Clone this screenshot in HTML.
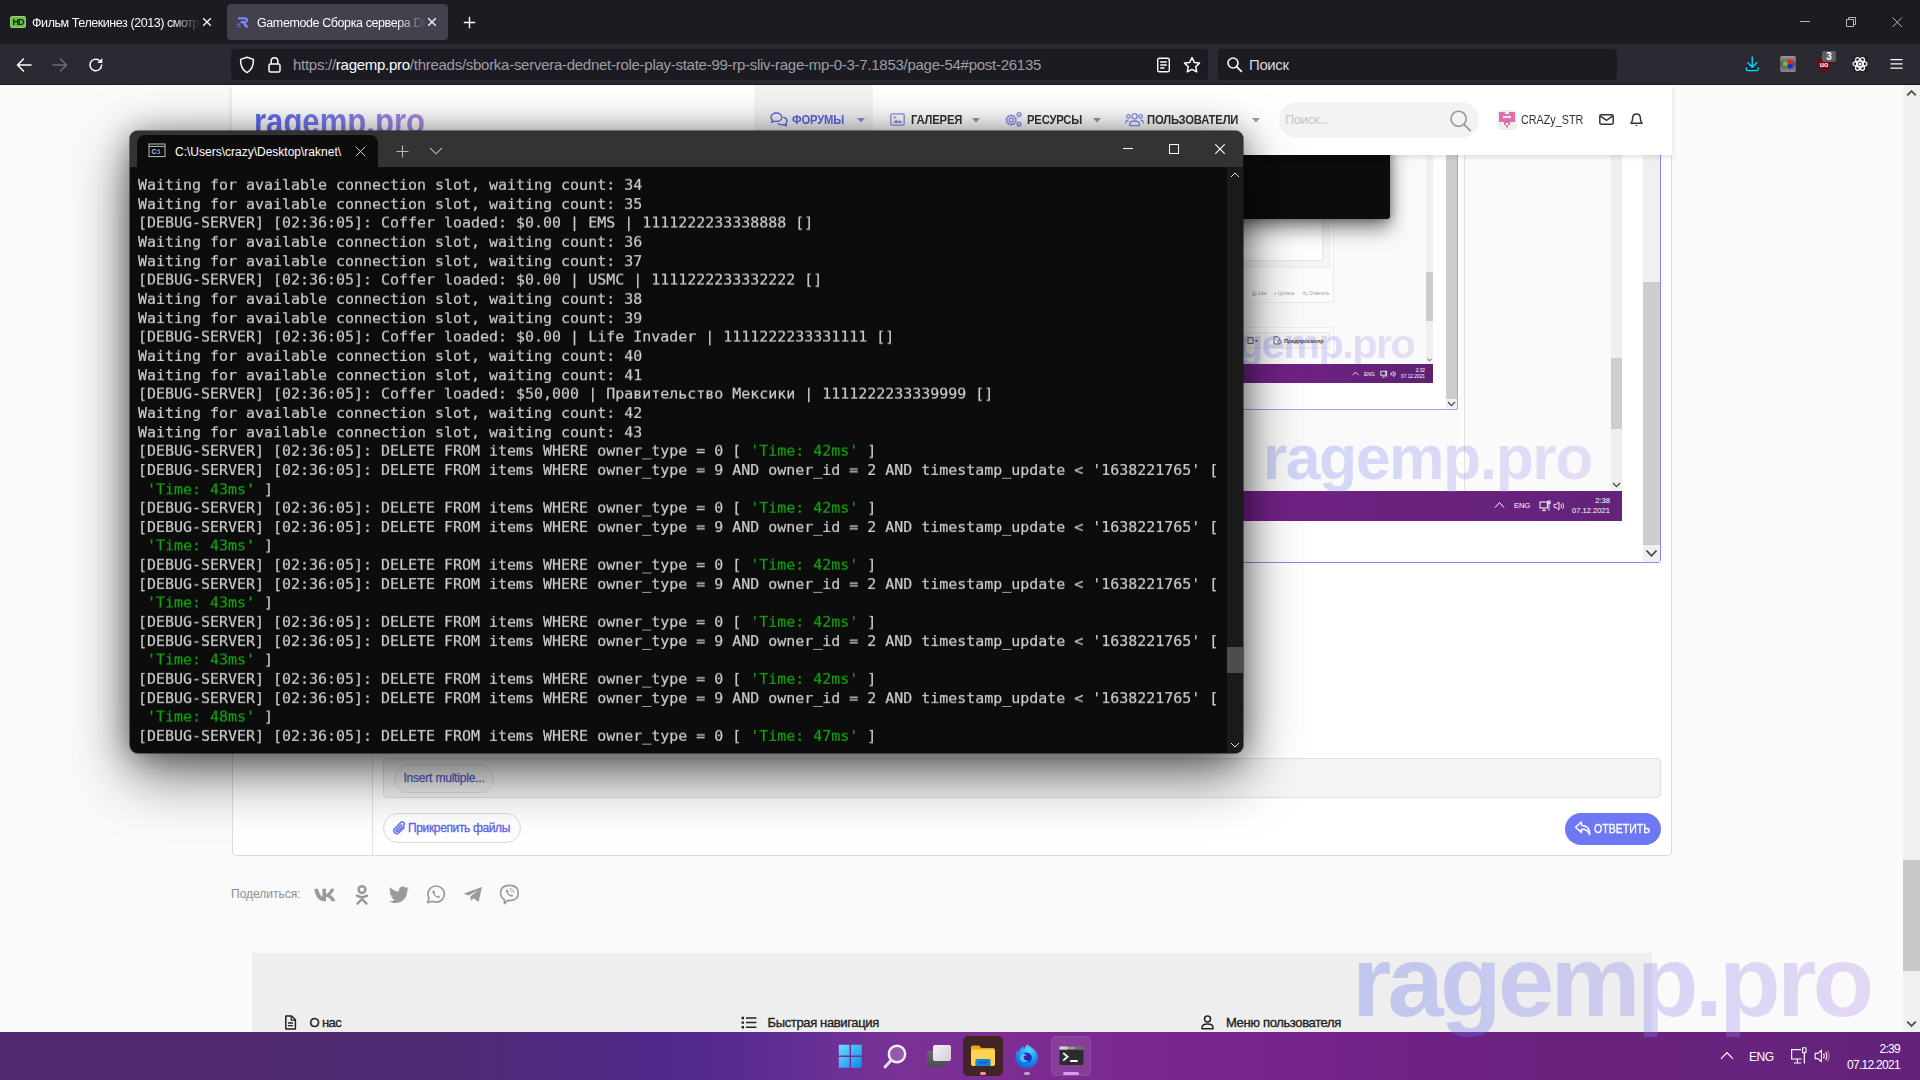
<!DOCTYPE html>
<html lang="ru">
<head>
<meta charset="utf-8">
<title>Gamemode Сборка сервера</title>
<style>
*{box-sizing:border-box;margin:0;padding:0}
html,body{width:1920px;height:1080px;overflow:hidden;background:#fafafa;font-family:"Liberation Sans",sans-serif;}
.abs{position:absolute}
#root{position:relative;width:1920px;height:1080px;overflow:hidden;background:#fafafa}
/* ---------- firefox chrome ---------- */
#tabbar{left:0;top:0;width:1920px;height:44px;background:#1c1b22}
#navbar{left:0;top:44px;width:1920px;height:41px;background:#2b2a33;border-bottom:1px solid #1a1920}
.tabtxt{font-size:13px;color:#fbfbfe;white-space:nowrap;overflow:hidden;line-height:16px}
#tab2{left:227px;top:4px;width:221px;height:36px;background:#42414d;border-radius:4px}
#urlbar{left:231px;top:48.5px;width:977px;height:31px;background:#1c1b22;border-radius:4px}
#searchbar{left:1218px;top:48.5px;width:399px;height:31px;background:#1c1b22;border-radius:4px}
#urltxt{left:293px;top:56px;font-size:15px;line-height:18px;color:#9f9ea8;white-space:nowrap;letter-spacing:-.272px}
#urltxt b{font-weight:normal;color:#fbfbfe}
/* ---------- page ---------- */
#page{left:0;top:85px;width:1903px;height:947px;background:#fafafa;overflow:hidden}
#pscroll{left:1903px;top:85px;width:17px;height:947px;background:#f0f0f0}
#pthumb{left:1903px;top:860px;width:17px;height:111px;background:#c8c8c8}
#hdr{left:232px;top:85px;width:1440px;height:70px;background:#fff;box-shadow:0 2px 6px rgba(0,0,0,.12)}
.nav{font-size:13px;font-weight:bold;color:#333;white-space:nowrap;line-height:16px;letter-spacing:-.2px;margin-top:1px}
.wm{font-weight:bold;white-space:nowrap;background:linear-gradient(90deg,#5a6cf0 0%,#7c7cf0 45%,#b18ce6 100%);-webkit-background-clip:text;background-clip:text;color:transparent;-webkit-text-fill-color:transparent}
.sx{transform:scaleX(.865);transform-origin:0 0}
.sx2{transform:scaleX(.83);transform-origin:0 0}
.ft{font-size:13px;line-height:16px;color:#222;white-space:nowrap;-webkit-text-stroke:.35px #222}
/* ---------- terminal ---------- */
#term{left:130px;top:131px;width:1113px;height:622px;background:#0c0c0c;border-radius:8px;box-shadow:0 20px 58px rgba(0,0,0,.58),0 2px 30px rgba(0,0,0,.36),0 0 0 1px rgba(40,40,40,.5);overflow:hidden}
#ttitle{left:0;top:0;width:1113px;height:36px;background:#333333}
#ttab{left:7px;top:4px;width:241px;height:32px;background:#0c0c0c;border-radius:8px 8px 0 0}
#tout{left:8px;top:45px;width:1090px;font-family:"DejaVu Sans Mono","Liberation Mono",monospace;font-size:14.965px;line-height:20.652px;color:#cccccc;white-space:pre;will-change:transform;transform:scaleY(.92);transform-origin:0 0;-webkit-text-stroke:.2px}
#tout i{font-style:normal;color:#13a10e}
#tsb{left:1097px;top:36px;width:16px;height:586px;background:#1a1a1a}
/* ---------- taskbar ---------- */
#taskbar{left:0;top:1032px;width:1920px;height:48px;background:linear-gradient(90deg,#52286e 0%,#4e2a72 23%,#50288a 34%,#5e2d92 40.6%,#6b3096 43.2%,#793194 47%,#7d2d91 52%,#7a2a90 57%,#74238a 68%,#6c2280 78%,#63237a 100%)}
.tray{color:#fff;font-size:12px;white-space:nowrap;line-height:14px}
</style>
</head>
<body>
<div id="root">

<!-- PAGE -->
<div id="page" class="abs"></div>
<div id="pagecontent">
<!-- post box -->
<div class="abs" style="left:232px;top:100px;width:1440px;height:756px;background:#fff;border:1px solid #dcdcdc;border-radius:4px"></div>
<div class="abs" style="left:372px;top:100px;width:1px;height:755px;background:#e2e2e2"></div>
<!-- editor blue frame -->
<div class="abs" style="left:383px;top:100px;width:1278px;height:463px;background:#fff;border:1px solid #8289f6;border-radius:3px"></div>

<!-- ===== nested screenshot level 1 ===== -->
<div class="abs" style="left:400px;top:150px;width:1222px;height:341px;background:#fafafa"></div>
<div class="abs" style="left:400px;top:150px;width:1064px;height:260px;background:#fff"></div>
<div class="abs" style="left:1458px;top:150px;width:6px;height:341px;background:#fdfdfd"></div>
<div class="abs" style="left:1464px;top:150px;width:1px;height:341px;background:#e1e1e1"></div>
<!-- level1 page scrollbar -->
<div class="abs" style="left:1611px;top:150px;width:11px;height:341px;background:#efefef"></div>
<div class="abs" style="left:1611px;top:358px;width:11px;height:71px;background:#cdcdcd"></div>
<svg class="abs" style="left:1612px;top:482px" width="9" height="6" viewBox="0 0 9 6"><path d="M1 1 L4.5 4.6 L8 1" stroke="#444" stroke-width="1.3" fill="none"/></svg>

<!-- ===== level 2 (inside level1 editor) ===== -->
<div class="abs" style="left:1100px;top:150px;width:326px;height:215px;background:#fafafa"></div>
<!-- l2 post boxes -->
<div class="abs" style="left:1100px;top:150px;width:234px;height:153px;background:#fcfcfc;border:1px solid #ececec;border-radius:2px"></div>
<div class="abs" style="left:1100px;top:150px;width:230px;height:118px;background:#f4f4f4;border:1px solid #ececec"></div>
<div class="abs" style="left:1100px;top:150px;width:223px;height:111px;background:#fff;border:1px solid #e6e6e6"></div>
<div class="abs" style="left:1100px;top:327px;width:234px;height:40px;background:#fbfbfb;border:1px solid #ececec;border-radius:2px"></div>
<div class="abs" style="left:1100px;top:332px;width:230px;height:17px;background:#f4f4f4;border:1px solid #e6e6e6"></div>
<div class="abs" style="left:1265px;top:332px;width:1px;height:17px;background:#e2e2e2"></div>
<svg class="abs" style="left:1252px;top:291px" width="5" height="5" viewBox="0 0 5 5"><path d="M.6 2.2 H1.6 V4.6 H.6Z M1.8 2.2 L2.8 .4 L3.2 2 H4.4 L4 4.6 H1.8Z" fill="none" stroke="#9a9a9a" stroke-width=".5"/></svg>
<div class="abs" style="left:1258px;top:290px;font-size:5px;line-height:7px;color:#9f9f9f;white-space:nowrap;letter-spacing:-.1px">Like</div>
<div class="abs" style="left:1274px;top:290px;font-size:5px;line-height:7px;color:#9f9f9f;white-space:nowrap;letter-spacing:-.1px">+ Цитата</div>
<svg class="abs" style="left:1302px;top:291px" width="6" height="5" viewBox="0 0 6 5"><path d="M2.4 .6 L.6 2.2 L2.4 3.8 V2.8 C3.8 2.8 4.6 3.2 5.2 4.4 C5.2 2.6 4.2 1.6 2.4 1.6Z" fill="none" stroke="#9a9a9a" stroke-width=".5"/></svg>
<div class="abs" style="left:1309px;top:290px;font-size:5px;line-height:7px;color:#9f9f9f;white-space:nowrap;letter-spacing:-.1px">Ответить</div>
<svg class="abs" style="left:1247px;top:336px" width="12" height="9" viewBox="0 0 12 9"><rect x="1" y="1.5" width="5" height="6" fill="none" stroke="#555" stroke-width=".9"/><path d="M8 4 L11 4 L9.5 6Z" fill="#555"/></svg>
<svg class="abs" style="left:1273px;top:336px" width="10" height="9" viewBox="0 0 10 9"><path d="M1 .7 H5 L6.6 2.4 V8 H1Z" fill="none" stroke="#444" stroke-width=".8"/><circle cx="6.6" cy="6" r="1.6" fill="#fff" stroke="#444" stroke-width=".7"/></svg>
<div class="abs" style="left:1284px;top:337px;font:bold 5.6px/8px 'Liberation Sans',sans-serif;color:#333;white-space:nowrap;letter-spacing:-.1px">Предпросмотр</div>
<!-- l2 inner terminal -->
<div class="abs" style="left:1100px;top:140px;width:290px;height:79px;background:#0c0c0c;border-radius:0 0 3px 0;box-shadow:0 9px 20px rgba(0,0,0,.5),0 1px 10px rgba(0,0,0,.3)"></div>
<!-- l2 watermark -->
<div class="abs wm" style="left:1202px;top:321.3px;font-size:41.5px;line-height:45px;padding-bottom:12px;letter-spacing:-1.6px;opacity:.25">ragemp.pro</div>
<!-- l2 page scrollbar -->
<div class="abs" style="left:1426px;top:150px;width:7px;height:215px;background:#f0f0f0"></div>
<div class="abs" style="left:1426px;top:272px;width:7px;height:49px;background:#cdcdcd"></div>
<svg class="abs" style="left:1427px;top:358px" width="5" height="4" viewBox="0 0 5 4"><path d="M.5 .7 L2.5 2.9 L4.5 .7" stroke="#444" stroke-width=".9" fill="none"/></svg>
<!-- l2 taskbar -->
<div class="abs" style="left:1100px;top:364.4px;width:333px;height:19px;background:linear-gradient(90deg,#79248f 0%,#6e2283 60%,#5e2172 100%)"></div>
<svg class="abs" style="left:1352px;top:371px" width="7" height="5" viewBox="0 0 7 5"><path d="M.6 4.2 L3.5 1 L6.4 4.2" stroke="#fff" stroke-width=".8" fill="none"/></svg>
<div class="abs" style="left:1364px;top:371px;font:5px/6px 'Liberation Sans',sans-serif;color:#fff">ENG</div>
<svg class="abs" style="left:1380px;top:370px" width="8" height="8" viewBox="0 0 8 8"><rect x=".8" y="1.2" width="5" height="4" fill="none" stroke="#fff" stroke-width=".8"/><path d="M2 7 H5 M6.6 .6 V7" stroke="#fff" stroke-width=".8"/></svg>
<svg class="abs" style="left:1390px;top:370px" width="8" height="8" viewBox="0 0 8 8"><path d="M.8 3 H2.2 L4 1.4 V6.6 L2.2 5 H.8Z" fill="none" stroke="#fff" stroke-width=".7"/><path d="M5.2 2.6 Q6.2 4 5.2 5.4" stroke="#fff" stroke-width=".7" fill="none"/></svg>
<div class="abs" style="left:1395px;top:367.5px;width:30px;text-align:right;font:4.8px/6.3px 'Liberation Sans',sans-serif;color:#fff;white-space:nowrap">2:32<br>07.12.2021</div>
<!-- l2 editor (textarea) scrollbar + frame -->
<div class="abs" style="left:1100px;top:383px;width:346px;height:26px;background:#fff"></div>
<div class="abs" style="left:1433px;top:150px;width:13px;height:259px;background:#fff"></div>
<div class="abs" style="left:1446px;top:150px;width:11px;height:259px;background:#f0f0f0"></div>
<div class="abs" style="left:1446px;top:150px;width:11px;height:249px;background:#cdcdcd"></div>
<svg class="abs" style="left:1447px;top:401px" width="9" height="6" viewBox="0 0 9 6"><path d="M1 1 L4.5 4.6 L8 1" stroke="#444" stroke-width="1.3" fill="none"/></svg>
<div class="abs" style="left:1100px;top:140px;width:358px;height:270px;border:1px solid #9ea3f5;border-radius:2px;border-top:none;border-left:none"></div>

<!-- level1 watermark -->
<!-- level1 taskbar -->
<div class="abs" style="left:400px;top:490.5px;width:1222px;height:30.5px;background:linear-gradient(90deg,#52286e 0%,#4e2a72 23%,#50288a 34%,#5e2d92 40.6%,#6b3096 43.2%,#793194 47%,#7d2d91 52%,#7a2a90 57%,#74238a 68%,#6c2280 78%,#63237a 100%)"></div>
<svg class="abs" style="left:1494px;top:501px" width="11" height="8" viewBox="0 0 11 8"><path d="M1 6.6 L5.5 1.6 L10 6.6" stroke="#fff" stroke-width="1" fill="none"/></svg>
<div class="abs" style="left:1514px;top:501px;font:7.6px/10px 'Liberation Sans',sans-serif;color:#fff;letter-spacing:-.1px">ENG</div>
<svg class="abs" style="left:1539px;top:500px" width="12" height="12" viewBox="0 0 12 12"><rect x="1" y="2" width="7.4" height="6" fill="none" stroke="#fff" stroke-width="1"/><path d="M3 10.6 H7 M5 8 V10.6 M10 1 V10.6 M8.8 1 H11.2 V3.6 H8.8Z" stroke="#fff" stroke-width=".9" fill="none"/></svg>
<svg class="abs" style="left:1553px;top:500px" width="13" height="12" viewBox="0 0 13 12"><path d="M1 4.4 H3.2 L6 2 V10 L3.2 7.6 H1Z" fill="none" stroke="#fff" stroke-width=".9"/><path d="M7.8 4 Q9.2 6 7.8 8 M9.6 2.8 Q11.8 6 9.6 9.2" stroke="#fff" stroke-width=".8" fill="none"/></svg>
<div class="abs" style="left:1560px;top:496px;width:50px;text-align:right;font:7.6px/10.2px 'Liberation Sans',sans-serif;color:#fff;white-space:nowrap">2:38<br>07.12.2021</div>

<div class="abs wm" style="left:1263px;top:420px;font-size:62.5px;line-height:74px;padding-bottom:20px;letter-spacing:-1.5px;opacity:.26">ragemp.pro</div>
<!-- outer editor scrollbar -->
<div class="abs" style="left:1643px;top:150px;width:17px;height:412px;background:#f0f0f0"></div>
<div class="abs" style="left:1643px;top:282px;width:17px;height:263px;background:#cdcdcd"></div>
<svg class="abs" style="left:1645px;top:549px" width="13" height="9" viewBox="0 0 13 9"><path d="M1.5 1.5 L6.5 6.8 L11.5 1.5" stroke="#444" stroke-width="1.8" fill="none"/></svg>

<!-- attach bar -->
<div class="abs" style="left:383px;top:758px;width:1278px;height:40px;background:#f5f5f5;border:1px solid #e0e0e0;border-radius:4px"></div>
<div class="abs" style="left:394px;top:764px;width:100px;height:29px;background:#f1f1f1;border:1px solid #dddddd;border-radius:15px;color:#5559c0;font-size:12px;line-height:27px;text-align:center;letter-spacing:-.2px;-webkit-text-stroke:.25px #5559c0">Insert multiple...</div>
<div class="abs" style="left:383px;top:813px;width:138px;height:30px;background:#fff;border:1px solid #dcdcdc;border-radius:15px"></div>
<svg class="abs" style="left:390.5px;top:819.5px" width="17" height="17" viewBox="0 0 15 15"><path d="M11.6 6.6 L7 11.2 A2.6 2.6 0 0 1 3.3 7.5 L8.6 2.2 A1.8 1.8 0 0 1 11.2 4.8 L6.2 9.8 A.9 .9 0 0 1 4.9 8.5 L9.2 4.2" stroke="#6a72ee" stroke-width="1.4" fill="none" stroke-linecap="round"/></svg>
<div class="abs" style="left:408px;top:820px;color:#5b64e6;font-size:12px;line-height:16px;white-space:nowrap;letter-spacing:-.36px;-webkit-text-stroke:.3px #5b64e6">Прикрепить файлы</div>
<!-- reply button -->
<div class="abs" style="left:1565px;top:813px;width:96px;height:32px;background:#6e78f5;border-radius:16px"></div>
<svg class="abs" style="left:1574px;top:820px" width="18" height="17" viewBox="0 0 18 17"><path d="M7.4 2 L1.6 7.2 L7.4 12.4 V9.2 C11.4 9 14 10.2 15.6 14.6 C16 8.6 12.6 5.4 7.4 5.2 Z" stroke="#fff" stroke-width="1.5" fill="none" stroke-linejoin="round"/></svg>
<div class="abs" style="left:1594px;top:821px;color:#fff;font-size:12px;line-height:16px;white-space:nowrap;-webkit-text-stroke:.3px #fff;transform:scaleX(.88);transform-origin:0 0">ОТВЕТИТЬ</div>

<!-- share row -->
<div class="abs" style="left:231px;top:886px;color:#8f8f8f;font-size:12px;line-height:16px;white-space:nowrap;letter-spacing:0">Поделиться:</div>
<div id="share">
<svg class="abs" style="left:314px;top:887.5px" width="24.4" height="14" viewBox="0 0 22 13" preserveAspectRatio="none"><path d="M.4 .6 H3.8 C4.4 4.6 6.4 7.6 7.6 8.2 V.6 H10.8 V5.4 C12.6 5.2 14.4 3 15.2 .6 H18.4 C17.8 3.4 16 5.4 14.6 6.4 C16.2 7.2 18.4 9.2 19.4 12.4 H15.8 C15 10.2 13.2 8.4 10.8 8.2 V12.4 H10 C4.6 12.4 .8 7.6 .4 .6Z" fill="#9a9a9a"/></svg>
<svg class="abs" style="left:355px;top:884px" width="14" height="21" viewBox="0 0 14 21"><circle cx="7" cy="5.6" r="3.4" fill="none" stroke="#9a9a9a" stroke-width="2.5"/><path d="M2 11.6 Q7 14.8 12 11.6 M7 13.4 V15 M7 15 L2.6 19.6 M7 15 L11.4 19.6" fill="none" stroke="#9a9a9a" stroke-width="2.5" stroke-linecap="round"/></svg>
<svg class="abs" style="left:388px;top:886px" width="22" height="17" viewBox="0 0 22 17"><path d="M21 2.4 C20.3 2.8 19.5 3 18.7 3.1 C19.5 2.6 20.2 1.8 20.5 .9 C19.7 1.4 18.8 1.7 17.9 1.9 C16.3 .2 13.6 .2 12 1.8 C10.9 2.9 10.5 4.3 10.9 5.7 C7.4 5.5 4.3 3.9 2.2 1.3 C1.1 3.2 1.6 5.6 3.5 6.8 C2.8 6.8 2.2 6.6 1.6 6.3 C1.6 8.3 3 10 5 10.4 C4.4 10.6 3.7 10.6 3.1 10.5 C3.6 12.2 5.2 13.4 7 13.4 C5.3 14.8 3 15.4 .9 15.2 C2.8 16.4 5 17 7.2 17 C15.2 17 19.6 10.4 19.3 4.2 C20 3.7 20.6 3.1 21 2.4Z" fill="#9a9a9a"/></svg>
<svg class="abs" style="left:426px;top:885px" width="20" height="19" viewBox="0 0 20 19"><path d="M10.2 1 C14.7 1 18.4 4.6 18.4 9.1 C18.4 13.6 14.7 17.2 10.2 17.2 C8.8 17.2 7.4 16.8 6.2 16.2 L1.6 17.6 L3 13.2 C2.3 12 1.9 10.6 1.9 9.1 C1.9 4.6 5.6 1 10.2 1Z" fill="none" stroke="#9a9a9a" stroke-width="1.7" stroke-linejoin="round"/><path d="M7.2 5.2 C6.6 5.6 6.2 6.6 6.6 7.8 C7.4 10 9.4 12 11.8 12.8 C12.8 13 13.8 12.6 14.2 11.8 L12.2 10.4 L11.2 11.2 C10 10.6 9 9.6 8.4 8.4 L9.2 7.4 L8 5.2Z" fill="#9a9a9a"/></svg>
<svg class="abs" style="left:463px;top:886px" width="20" height="17" viewBox="0 0 20 17"><path d="M.8 7.6 L19 1 L15.6 16 L10.6 12.2 L8 15 L7.4 10.6 L15.4 4 L5.6 9.6 Z" fill="#9a9a9a"/></svg>
<svg class="abs" style="left:499px;top:884px" width="21" height="21" viewBox="0 0 21 21"><path d="M10.4 1.4 C15.6 1.4 19.2 3.6 19.2 9 C19.2 14.2 15.8 16.6 10.6 16.6 C10 16.6 9.4 16.6 8.8 16.4 L5.4 19.6 V15.4 C2.8 14.2 1.6 12 1.6 9 C1.6 3.6 5.2 1.4 10.4 1.4Z" fill="none" stroke="#9a9a9a" stroke-width="1.6" stroke-linejoin="round"/><path d="M7.6 5.4 C7 5.8 6.6 6.6 7 7.6 C7.8 9.8 9.8 11.8 12.2 12.6 C13.2 12.8 14 12.2 14.2 11.6 L12.6 10.4 L11.6 11 C10.4 10.4 9.4 9.4 8.8 8.2 L9.6 7.2 L8.4 5.4Z" fill="#9a9a9a"/><path d="M11 4.6 C13.2 4.8 14.6 6.2 14.8 8.4 M11.2 6.4 C12.2 6.6 12.8 7.2 13 8.2" fill="none" stroke="#9a9a9a" stroke-width=".9" stroke-linecap="round"/></svg>
</div>


<!-- footer -->
<div class="abs" style="left:252px;top:953px;width:1400px;height:90px;background:#eeeeee"></div>
<div id="footer">
<svg class="abs" style="left:284px;top:1015px" width="13" height="15" viewBox="0 0 13 15"><path d="M1.8 1 H7.6 L11.4 4.8 V14 H1.8Z" fill="none" stroke="#222" stroke-width="1.5" stroke-linejoin="round"/><path d="M4 8 H9 M4 10.6 H9" stroke="#222" stroke-width="1.4"/><path d="M7.2 1.2 V5.2 H11.2" fill="none" stroke="#222" stroke-width="1.2"/></svg>
<div class="abs ft" style="left:309.5px;top:1015px;letter-spacing:-.6px">О нас</div>
<svg class="abs" style="left:741px;top:1016px" width="16" height="13" viewBox="0 0 16 13"><path d="M5 2 H15.4 M5 6.6 H15.4 M5 11.2 H15.4" stroke="#222" stroke-width="1.5"/><path d="M.6 .8 H3 V3.2 H.6Z M.6 5.4 H3 V7.8 H.6Z M.6 10 H3 V12.4 H.6Z" fill="#222"/></svg>
<div class="abs ft" style="left:767.5px;top:1015px;letter-spacing:-.36px">Быстрая навигация</div>
<svg class="abs" style="left:1201px;top:1015px" width="13" height="15" viewBox="0 0 13 15"><circle cx="6.5" cy="4" r="3" fill="none" stroke="#222" stroke-width="1.5"/><path d="M1 13.8 V12.6 C1 10.4 3 9 6.5 9 C10 9 12 10.4 12 12.6 V13.8Z" fill="none" stroke="#222" stroke-width="1.5" stroke-linejoin="round"/></svg>
<div class="abs ft" style="left:1226px;top:1015px;letter-spacing:-.36px">Меню пользователя</div>
</div>

</div>

<div id="hdr" class="abs"></div>
<div id="hdrcontent">
<div class="abs" style="left:754px;top:85px;width:119px;height:70px;background:#f3f3f3"></div>
<div class="abs wm" style="left:254px;top:103.3px;font-size:37px;line-height:37px;transform:scaleX(.84);transform-origin:0 0">ragemp.pro</div>
<!-- nav: forums -->
<svg class="abs" style="left:770px;top:112px" width="18" height="15" viewBox="0 0 18 15"><path d="M6.4 1 C9.4 1 11.8 2.8 11.8 5.2 C11.8 7.6 9.4 9.4 6.4 9.4 C5.6 9.4 4.9 9.3 4.2 9.1 L1.6 10.4 L2.5 8.2 C1.6 7.4 1 6.4 1 5.2 C1 2.8 3.4 1 6.4 1 Z" fill="none" stroke="#5b66e6" stroke-width="1.4" stroke-linejoin="round"/><path d="M13.4 5.4 C15.6 5.9 17 7.3 17 9 C17 10.1 16.5 11 15.7 11.7 L16.4 13.8 L14 12.6 C13.4 12.8 12.7 12.9 12 12.9 C10.2 12.9 8.7 12.2 7.8 11.1" fill="none" stroke="#5b66e6" stroke-width="1.4" stroke-linejoin="round"/></svg>
<div class="abs nav sx" style="left:792px;top:111px;color:#5b66e6">ФОРУМЫ</div>
<svg class="abs" style="left:857px;top:118px" width="8" height="5" viewBox="0 0 8 5"><path d="M0 0 H8 L4 4.6Z" fill="#8a90ee"/></svg>
<!-- gallery -->
<svg class="abs" style="left:890px;top:113px" width="15" height="13" viewBox="0 0 15 13"><rect x=".8" y=".8" width="13.4" height="11.4" rx="1.4" fill="none" stroke="#8a90ee" stroke-width="1.3"/><path d="M3 10 L6 6.4 L8 8.6 L10 7 L12.2 10Z" fill="#8a90ee"/><circle cx="4.6" cy="4.4" r="1.1" fill="#8a90ee"/></svg>
<div class="abs nav sx" style="left:911px;top:111px">ГАЛЕРЕЯ</div>
<svg class="abs" style="left:972px;top:118px" width="8" height="5" viewBox="0 0 8 5"><path d="M0 0 H8 L4 4.6Z" fill="#9a9a9a"/></svg>
<!-- resources -->
<svg class="abs" style="left:1005px;top:111px" width="18" height="17" viewBox="0 0 18 17"><g fill="none" stroke="#8a90ee" stroke-width="1.3"><circle cx="6.2" cy="9" r="2"/><path d="M6.2 3.8 L7.4 5.2 L9.2 4.8 L9.6 6.6 L11.2 7.6 L10.4 9 L11.2 10.6 L9.6 11.4 L9.2 13.2 L7.4 12.8 L6.2 14.2 L5 12.8 L3.2 13.2 L2.8 11.4 L1.2 10.6 L2 9 L1.2 7.6 L2.8 6.6 L3.2 4.8 L5 5.2 Z" stroke-linejoin="round"/><circle cx="14" cy="3.6" r="1.9"/><circle cx="14" cy="13.2" r="1.9"/></g><circle cx="14" cy="3.6" r=".7" fill="#8a90ee"/><circle cx="14" cy="13.2" r=".7" fill="#8a90ee"/></svg>
<div class="abs nav sx" style="left:1027px;top:111px">РЕСУРСЫ</div>
<svg class="abs" style="left:1093px;top:118px" width="8" height="5" viewBox="0 0 8 5"><path d="M0 0 H8 L4 4.6Z" fill="#9a9a9a"/></svg>
<!-- users -->
<svg class="abs" style="left:1125px;top:112px" width="19" height="15" viewBox="0 0 19 15"><g fill="none" stroke="#8a90ee" stroke-width="1.3"><circle cx="9.5" cy="4.2" r="2.6"/><path d="M4.6 13.6 V12.4 C4.6 10.4 6.4 9 9.5 9 C12.6 9 14.4 10.4 14.4 12.4 V13.6 Z" stroke-linejoin="round"/><circle cx="3.4" cy="4.4" r="1.7"/><circle cx="15.6" cy="4.4" r="1.7"/><path d="M.8 11.6 V10.6 C.8 9.2 1.8 8.2 3.6 8.2 M18.2 11.6 V10.6 C18.2 9.2 17.2 8.2 15.4 8.2"/></g></svg>
<div class="abs nav sx" style="left:1147px;top:111px">ПОЛЬЗОВАТЕЛИ</div>
<svg class="abs" style="left:1252px;top:118px" width="8" height="5" viewBox="0 0 8 5"><path d="M0 0 H8 L4 4.6Z" fill="#9a9a9a"/></svg>
<!-- search pill -->
<div class="abs" style="left:1279px;top:102px;width:200px;height:36px;background:#f3f3f3;border-radius:18px"></div>
<div class="abs" style="left:1285px;top:112px;font-size:13px;line-height:16px;color:#c6c6c6;letter-spacing:-.35px;white-space:nowrap">Поиск...</div>
<svg class="abs" style="left:1449px;top:109px" width="23" height="23" viewBox="0 0 23 23"><circle cx="9.6" cy="9.8" r="7.6" fill="none" stroke="#9a9a9a" stroke-width="1.6"/><path d="M15 15.4 L21.4 21.6" stroke="#9a9a9a" stroke-width="1.8" stroke-linecap="round"/></svg>
<!-- avatar -->
<div class="abs" style="left:1497px;top:110px;width:20px;height:20px;background:#efefef;border-radius:4px"></div>
<svg class="abs" style="left:1498px;top:111px" width="18" height="18" viewBox="0 0 18 18"><path d="M1 1 H7 V3 H11 V1 H17 V11 H12 V14 H10 V16.5 H8 V14 H6 V11 H1Z M5 5 V7 H13 V5Z" fill="#e06fae" fill-rule="evenodd"/><rect x="8" y="12" width="2" height="2" fill="#fff"/></svg>
<div class="abs sx2" style="left:1521px;top:112px;font-size:13px;line-height:16px;color:#333;white-space:nowrap">CRAZy_STR</div>
<svg class="abs" style="left:1599px;top:114px" width="15" height="11" viewBox="0 0 15 11"><rect x=".8" y=".8" width="13.4" height="9.4" rx="1.4" fill="none" stroke="#333" stroke-width="1.5"/><path d="M1.2 1.8 L7.5 6.4 L13.8 1.8" fill="none" stroke="#333" stroke-width="1.5"/></svg>
<svg class="abs" style="left:1630px;top:113px" width="13" height="14" viewBox="0 0 13 14"><path d="M6.5 1 C9 1 10.4 2.8 10.4 5.4 C10.4 8 11 9 12 10.2 H1 C2 9 2.6 8 2.6 5.4 C2.6 2.8 4 1 6.5 1 Z" fill="none" stroke="#333" stroke-width="1.5" stroke-linejoin="round"/><path d="M5 12 Q6.5 14 8 12Z" fill="#333"/></svg>
</div>

<div id="pscroll" class="abs"></div>
<div id="pthumb" class="abs"></div>
<svg class="abs" style="left:1906px;top:89px" width="11" height="8" viewBox="0 0 11 8"><path d="M1.2 6.4 L5.5 2 L9.8 6.4" stroke="#505050" stroke-width="1.9" fill="none"/></svg>
<svg class="abs" style="left:1906px;top:1020px" width="11" height="8" viewBox="0 0 11 8"><path d="M1.2 1.6 L5.5 6 L9.8 1.6" stroke="#505050" stroke-width="1.9" fill="none"/></svg>

<!-- FIREFOX CHROME -->
<div id="tabbar" class="abs"></div>
<div id="navbar" class="abs"></div>
<div id="chrome">
<!-- tab 1 -->
<div class="abs" style="left:10px;top:16px;width:16px;height:12px;background:#6cc04a;border-radius:2px;border:1px solid #8ad868"></div>
<div class="abs" style="left:11px;top:16px;width:14px;height:12px;font:bold 9px/12px 'Liberation Sans',sans-serif;color:#16240e;letter-spacing:-1px;text-align:center">HD</div>
<div class="abs tabtxt" style="left:32px;top:15px;width:169px;font-size:12.5px;letter-spacing:-.43px;-webkit-mask-image:linear-gradient(90deg,#000 0,#000 140px,transparent 169px)">Фильм Телекинез (2013) смотреть онлайн</div>
<svg class="abs" style="left:202px;top:17px" width="10" height="10" viewBox="0 0 10 10"><path d="M1.2 1.2 L8.8 8.8 M8.8 1.2 L1.2 8.8" stroke="#fbfbfe" stroke-width="1.3" fill="none"/></svg>
<!-- tab 2 -->
<div id="tab2" class="abs"></div>
<svg class="abs" style="left:236px;top:15px" width="15" height="15" viewBox="0 0 15 15"><path d="M2 2.2 H9.2 C13 2.2 13 7.6 9.4 7.8 L12.8 12.6 H9.6 L6.6 8.2 H4.6 V6 H9 C10.4 6 10.4 4.4 9 4.4 H2 Z" fill="#7f86ff"/><path d="M0.6 8.6 H4.2 V10.2 H0.6 Z M1.2 11.2 H5 V12.6 H1.2Z" fill="#5f66d8"/></svg>
<div class="abs tabtxt" style="left:257px;top:15px;width:169px;font-size:12.5px;letter-spacing:-.4px;-webkit-mask-image:linear-gradient(90deg,#000 0,#000 140px,transparent 169px)">Gamemode Сборка сервера DEDNET Role Play</div>
<svg class="abs" style="left:427px;top:17px" width="10" height="10" viewBox="0 0 10 10"><path d="M1.2 1.2 L8.8 8.8 M8.8 1.2 L1.2 8.8" stroke="#fbfbfe" stroke-width="1.3" fill="none"/></svg>
<svg class="abs" style="left:463px;top:16px" width="13" height="13" viewBox="0 0 13 13"><path d="M6.5 0.8 V12.2 M0.8 6.5 H12.2" stroke="#fbfbfe" stroke-width="1.4" fill="none"/></svg>
<!-- window controls -->
<svg class="abs" style="left:1800px;top:21px" width="10" height="2" viewBox="0 0 10 2"><path d="M0 .5 H10" stroke="#b4b3bb" stroke-width="1"/></svg>
<svg class="abs" style="left:1846px;top:17px" width="11" height="11" viewBox="0 0 11 11"><path d="M0.5 2.5 H7.5 V9.5 H0.5 Z M2.5 2.5 V0.5 H9.5 V7.5 H7.5" stroke="#b4b3bb" stroke-width="1" fill="none"/></svg>
<svg class="abs" style="left:1892px;top:17px" width="11" height="11" viewBox="0 0 11 11"><path d="M0.5 0.5 L10 10 M10 0.5 L0.5 10" stroke="#b4b3bb" stroke-width="1" fill="none"/></svg>
<!-- nav buttons -->
<svg class="abs" style="left:16px;top:57px" width="16" height="16" viewBox="0 0 16 16"><path d="M15 8 H2 M7.5 2 L1.5 8 L7.5 14" stroke="#fbfbfe" stroke-width="1.5" fill="none" stroke-linecap="round" stroke-linejoin="round"/></svg>
<svg class="abs" style="left:52px;top:57px" width="16" height="16" viewBox="0 0 16 16"><path d="M1 8 H14 M8.5 2 L14.5 8 L8.5 14" stroke="#6e6d78" stroke-width="1.5" fill="none" stroke-linecap="round" stroke-linejoin="round"/></svg>
<svg class="abs" style="left:88px;top:57px" width="16" height="16" viewBox="0 0 16 16"><path d="M13.6 8 A5.8 5.8 0 1 1 11.2 3.3" stroke="#fbfbfe" stroke-width="1.5" fill="none" stroke-linecap="round"/><path d="M14.3 1 V6 H9.3 Z" fill="#fbfbfe"/></svg>
<!-- url bar -->
<div id="urlbar" class="abs"></div>
<svg class="abs" style="left:239px;top:56px" width="16" height="18" viewBox="0 0 16 18"><path d="M8 1.2 L14.4 3.4 C14.6 9.6 12.6 14 8 16.6 C3.4 14 1.4 9.6 1.6 3.4 Z" stroke="#fbfbfe" stroke-width="1.5" fill="none" stroke-linejoin="round"/></svg>
<svg class="abs" style="left:267px;top:56px" width="15" height="18" viewBox="0 0 15 18"><path d="M4.2 8 V5 A3.3 3.3 0 0 1 10.8 5 V8" stroke="#fbfbfe" stroke-width="1.5" fill="none"/><rect x="2" y="8" width="11" height="8" rx="1.6" stroke="#fbfbfe" stroke-width="1.5" fill="none"/></svg>
<div id="urltxt" class="abs">https://<b>ragemp.pro</b>/threads/sborka-servera-dednet-role-play-state-99-rp-sliv-rage-mp-0-3-7.1853/page-54#post-26135</div>
<svg class="abs" style="left:1156px;top:57px" width="15" height="16" viewBox="0 0 15 16"><rect x="1.7" y="1.2" width="11.6" height="13.6" rx="1.6" stroke="#fbfbfe" stroke-width="1.4" fill="none"/><path d="M4.2 5 H10.8 M4.2 8 H10.8 M4.2 11 H8.5" stroke="#fbfbfe" stroke-width="1.3"/></svg>
<svg class="abs" style="left:1183px;top:56px" width="18" height="18" viewBox="0 0 18 18"><path d="M9 1.6 L11.3 6.4 L16.5 7.1 L12.7 10.7 L13.7 15.9 L9 13.4 L4.3 15.9 L5.3 10.7 L1.5 7.1 L6.7 6.4 Z" stroke="#fbfbfe" stroke-width="1.5" fill="none" stroke-linejoin="round"/></svg>
<!-- search bar -->
<div id="searchbar" class="abs"></div>
<svg class="abs" style="left:1226px;top:56px" width="17" height="17" viewBox="0 0 17 17"><circle cx="7" cy="7" r="5" stroke="#fbfbfe" stroke-width="1.6" fill="none"/><path d="M10.8 10.8 L15.4 15.4" stroke="#fbfbfe" stroke-width="1.8" stroke-linecap="round"/></svg>
<div class="abs" style="left:1249px;top:56px;font-size:15px;line-height:18px;color:#d8d7de;letter-spacing:-.4px">Поиск</div>
<!-- toolbar icons -->
<svg class="abs" style="left:1744.5px;top:55.5px" width="14.5" height="16.5" viewBox="0 0 16 18"><path d="M8 1 V12 M3.2 7.4 L8 12.2 L12.8 7.4 M1.4 13 V14.4 Q1.4 16 3 16 H13 Q14.6 16 14.6 14.4 V13" stroke="#00ddff" stroke-width="1.5" fill="none" stroke-linecap="round" stroke-linejoin="round"/></svg>
<svg class="abs" style="left:1780px;top:56px" width="16" height="16" viewBox="0 0 16 16"><defs><linearGradient id="exg" x1="0" y1="0" x2="0" y2="1"><stop offset="0" stop-color="#9a9a9a"/><stop offset=".5" stop-color="#555"/><stop offset="1" stop-color="#8a8a8a"/></linearGradient></defs><rect x="0" y="0" width="16" height="16" rx="2.2" fill="url(#exg)"/><path d="M9.5 2 L11 4.4 L13.6 4.6 L11.8 6.6 L12.4 9 L9.5 7.8 L7.4 8.6 L7.8 6.2 L6.6 4.4 L8.6 4.2 Z" fill="#e8202a"/><path d="M5 4.6 L6.6 6.4 L8.6 7 L7 8.8 L6.8 11 L4.8 9.8 L2.4 10 L3.4 8 L2.4 6 L4.4 6.2 Z" fill="#5ad02c"/><path d="M9 7.6 L11 8.6 L13.2 8.2 L12.2 10.2 L13 12.4 L10.8 12 L9 13.6 L8.6 11.4 L6.8 10 L8.6 9.4 Z" fill="#1428e0"/></svg>
<svg class="abs" style="left:1816px;top:57px" width="16" height="16" viewBox="0 0 16 16"><path d="M8 0.4 C10 1.6 12.4 2 15 2 C15 8.6 12.6 13 8 15.6 C3.4 13 1 8.6 1 2 C3.6 2 6 1.6 8 0.4 Z" fill="#800000"/><text x="8" y="9.5" font-family="Liberation Sans,sans-serif" font-size="7" font-weight="bold" fill="#fff" text-anchor="middle">uo</text></svg>
<div class="abs" style="left:1822px;top:51px;width:14px;height:11px;background:#5d5d62;border-radius:2px;color:#fff;font:bold 10px/11px 'Liberation Sans',sans-serif;text-align:center">3</div>
<div class="abs" style="left:1852px;top:56px;width:16px;height:16px;background:#23222b"></div>
<svg class="abs" style="left:1852px;top:56px" width="16" height="16" viewBox="0 0 16 16"><g stroke="#fbfbfe" stroke-width="1.3" fill="none"><ellipse cx="8" cy="8" rx="7" ry="2.8"/><ellipse cx="8" cy="8" rx="7" ry="2.8" transform="rotate(60 8 8)"/><ellipse cx="8" cy="8" rx="7" ry="2.8" transform="rotate(120 8 8)"/></g><circle cx="8" cy="8" r="1.5" fill="#fbfbfe"/></svg>
<svg class="abs" style="left:1889.5px;top:57.5px" width="13" height="12.4" viewBox="0 0 14 13" preserveAspectRatio="none"><path d="M1 1.7 H13 M1 6.2 H13 M1 10.7 H13" stroke="#fbfbfe" stroke-width="1.4" stroke-linecap="round"/></svg>
</div>


<!-- TERMINAL -->
<div id="term" class="abs">
<div id="ttitle" class="abs"></div>
<div id="ttab" class="abs"></div>
<svg class="abs" style="left:18px;top:12px" width="18" height="15" viewBox="0 0 18 15"><rect x="1" y="1" width="16" height="12.6" fill="none" stroke="#bdbdbd" stroke-width="1"/><path d="M1 3.4 H17" stroke="#bdbdbd" stroke-width="1"/><text x="3.6" y="11" font-family="Liberation Sans,sans-serif" font-size="6.4" font-weight="bold" fill="#d0d0d0">C:\</text></svg>
<div class="abs" style="left:45px;top:14px;font-size:12px;line-height:15px;color:#fff;white-space:nowrap">C:\Users\crazy\Desktop\raknet\</div>
<svg class="abs" style="left:225px;top:15px" width="11" height="11" viewBox="0 0 11 11"><path d="M.8 .8 L10.2 10.2 M10.2 .8 L.8 10.2" stroke="#d6d6d6" stroke-width="1" fill="none"/></svg>
<svg class="abs" style="left:266px;top:14px" width="13" height="13" viewBox="0 0 13 13"><path d="M6.5 .5 V12.5 M.5 6.5 H12.5" stroke="#b8b8b8" stroke-width="1.1" fill="none"/></svg>
<svg class="abs" style="left:299px;top:16px" width="14" height="8" viewBox="0 0 14 8"><path d="M1 .8 L7 6.8 L13 .8" stroke="#b8b8b8" stroke-width="1.1" fill="none"/></svg>
<svg class="abs" style="left:993px;top:17px" width="10" height="2" viewBox="0 0 10 2"><path d="M0 .5 H10" stroke="#fff" stroke-width="1"/></svg>
<svg class="abs" style="left:1039px;top:13px" width="10" height="10" viewBox="0 0 10 10"><rect x=".5" y=".5" width="9" height="9" fill="none" stroke="#fff" stroke-width="1"/></svg>
<svg class="abs" style="left:1085px;top:13px" width="10" height="10" viewBox="0 0 10 10"><path d="M.3 .3 L9.7 9.7 M9.7 .3 L.3 9.7" stroke="#fff" stroke-width="1.1" fill="none"/></svg>
<!-- scrollbar -->
<div id="tsb" class="abs"></div>
<svg class="abs" style="left:1100px;top:41px" width="10" height="6" viewBox="0 0 10 6"><path d="M1 5 L5 1 L9 5" stroke="#e6e6e6" stroke-width="1" fill="none"/></svg>
<svg class="abs" style="left:1100px;top:611px" width="10" height="6" viewBox="0 0 10 6"><path d="M1 1 L5 5 L9 1" stroke="#e6e6e6" stroke-width="1" fill="none"/></svg>
<div class="abs" style="left:1097px;top:516px;width:16px;height:26px;background:#4d4d4d"></div>

<div id="tout" class="abs">Waiting for available connection slot, waiting count: 34
Waiting for available connection slot, waiting count: 35
[DEBUG-SERVER] [02:36:05]: Coffer loaded: $0.00 | EMS | 1111222233338888 []
Waiting for available connection slot, waiting count: 36
Waiting for available connection slot, waiting count: 37
[DEBUG-SERVER] [02:36:05]: Coffer loaded: $0.00 | USMC | 1111222233332222 []
Waiting for available connection slot, waiting count: 38
Waiting for available connection slot, waiting count: 39
[DEBUG-SERVER] [02:36:05]: Coffer loaded: $0.00 | Life Invader | 1111222233331111 []
Waiting for available connection slot, waiting count: 40
Waiting for available connection slot, waiting count: 41
[DEBUG-SERVER] [02:36:05]: Coffer loaded: $50,000 | Правительство Мексики | 1111222233339999 []
Waiting for available connection slot, waiting count: 42
Waiting for available connection slot, waiting count: 43
[DEBUG-SERVER] [02:36:05]: DELETE FROM items WHERE owner_type = 0 [ <i>'Time: 42ms'</i> ]
[DEBUG-SERVER] [02:36:05]: DELETE FROM items WHERE owner_type = 9 AND owner_id = 2 AND timestamp_update &lt; '1638221765' [
 <i>'Time: 43ms'</i> ]
[DEBUG-SERVER] [02:36:05]: DELETE FROM items WHERE owner_type = 0 [ <i>'Time: 42ms'</i> ]
[DEBUG-SERVER] [02:36:05]: DELETE FROM items WHERE owner_type = 9 AND owner_id = 2 AND timestamp_update &lt; '1638221765' [
 <i>'Time: 43ms'</i> ]
[DEBUG-SERVER] [02:36:05]: DELETE FROM items WHERE owner_type = 0 [ <i>'Time: 42ms'</i> ]
[DEBUG-SERVER] [02:36:05]: DELETE FROM items WHERE owner_type = 9 AND owner_id = 2 AND timestamp_update &lt; '1638221765' [
 <i>'Time: 43ms'</i> ]
[DEBUG-SERVER] [02:36:05]: DELETE FROM items WHERE owner_type = 0 [ <i>'Time: 42ms'</i> ]
[DEBUG-SERVER] [02:36:05]: DELETE FROM items WHERE owner_type = 9 AND owner_id = 2 AND timestamp_update &lt; '1638221765' [
 <i>'Time: 43ms'</i> ]
[DEBUG-SERVER] [02:36:05]: DELETE FROM items WHERE owner_type = 0 [ <i>'Time: 42ms'</i> ]
[DEBUG-SERVER] [02:36:05]: DELETE FROM items WHERE owner_type = 9 AND owner_id = 2 AND timestamp_update &lt; '1638221765' [
 <i>'Time: 48ms'</i> ]
[DEBUG-SERVER] [02:36:05]: DELETE FROM items WHERE owner_type = 0 [ <i>'Time: 47ms'</i> ]</div>
</div>

<!-- TASKBAR -->
<div id="taskbar" class="abs"></div>
<div id="tbcontent">
<!-- start -->
<svg class="abs" style="left:838px;top:1044px" width="25" height="25" viewBox="0 0 25 25"><defs><linearGradient id="wg" x1="0" y1="0" x2="1" y2="1"><stop offset="0" stop-color="#6fdcff"/><stop offset="1" stop-color="#0c8ae8"/></linearGradient></defs><path d="M.8 .8 H11.6 V11.6 H.8Z M13 .8 H23.8 V11.6 H13Z M.8 13 H11.6 V23.8 H.8Z M13 13 H23.8 V23.8 H13Z" fill="url(#wg)"/></svg>
<!-- search -->
<svg class="abs" style="left:882px;top:1043px" width="26" height="27" viewBox="0 0 26 27"><circle cx="15" cy="11" r="8.2" fill="rgba(200,170,215,.35)" stroke="#f4eef6" stroke-width="2.4"/><path d="M9 17.4 L3 24" stroke="#e6dcea" stroke-width="3" stroke-linecap="round"/></svg>
<!-- task view -->
<div class="abs" style="left:927px;top:1051px;width:18px;height:16px;background:linear-gradient(180deg,#6a6a6e,#4a4a4e);border-radius:2px"></div>
<div class="abs" style="left:933px;top:1045px;width:18px;height:16px;background:linear-gradient(135deg,#ffffff,#d8d8dc);border-radius:2px;opacity:.93"></div>
<!-- explorer -->
<div class="abs" style="left:963px;top:1036px;width:40px;height:40px;background:#432427;border-radius:5px"></div>
<svg class="abs" style="left:970px;top:1044px" width="26" height="24" viewBox="0 0 26 24"><path d="M1 3.2 Q1 1.4 2.8 1.4 H9 L11.4 4 H23 Q25 4 25 6 V8 H1Z" fill="#e8a915"/><rect x="1" y="5.4" width="24" height="16.6" rx="1.8" fill="#fcd354"/><path d="M5.4 22 V16.6 Q5.4 15 7 15 H19 Q20.6 15 20.6 16.6 V22Z" fill="#1386d8"/><rect x="8.6" y="17.6" width="8.8" height="1.8" rx=".9" fill="#0c66b4"/></svg>
<div class="abs" style="left:980px;top:1072px;width:6px;height:3px;background:#f193a8;border-radius:2px"></div>
<!-- firefox dev -->
<svg class="abs" style="left:1014px;top:1043px" width="25" height="26" viewBox="0 0 25 26"><defs><radialGradient id="fg" cx=".6" cy=".25" r=".9"><stop offset="0" stop-color="#55d8ff"/><stop offset=".55" stop-color="#1a8cf0"/><stop offset="1" stop-color="#0d4fd0"/></radialGradient></defs><path d="M13.4 1 C14.6 3 16.6 3.6 18.8 5.4 C22 7.8 24.2 11 23.8 15.6 C23.2 21.2 18.6 25.2 12.6 25.2 C6.2 25.2 1.2 20.6 1.2 14.2 C1.2 10.8 2.4 8.4 3.6 6.8 C3.6 8 4 8.8 4.6 9.4 C5.4 6.4 7.4 4.2 9.6 3 C9.2 4.2 9.4 5.2 10 6 C10.8 4 12 2.2 13.4 1Z" fill="url(#fg)"/><circle cx="12.6" cy="14.6" r="5.2" fill="#2b2bb0"/><path d="M7.2 11.6 C9 10.4 11.4 10.8 12.6 12.2 C10.8 12.2 9.8 13 9.6 14.2 C9.4 16.6 12 18.4 15 17.6 C13 20.2 8.4 19.8 6.6 16.8 C5.8 15.2 6 13 7.2 11.6Z" fill="#4fc4ff"/></svg>
<div class="abs" style="left:1024px;top:1072px;width:6px;height:3px;background:#b9a4c8;border-radius:2px"></div>
<!-- terminal -->
<div class="abs" style="left:1051px;top:1036px;width:40px;height:40px;background:rgba(255,255,255,.09);border:1px solid rgba(255,255,255,.07);border-radius:5px"></div>
<svg class="abs" style="left:1059px;top:1046px" width="25" height="20" viewBox="0 0 25 20"><rect x=".5" y=".5" width="24" height="18.4" rx="1.6" fill="#2c2c2e"/><path d="M.5 3.6 V2 Q.5 .5 2 .5 H23 Q24.5 .5 24.5 2 V3.6Z" fill="#9c9c9c"/><rect x=".5" y=".5" width="8" height="3.1" fill="#cfcfcf"/><rect x="16" y=".5" width="8.5" height="3.1" fill="#6a6a6a"/><path d="M4.2 7 L8.6 10.8 L4.2 14.6" fill="none" stroke="#e8e8e8" stroke-width="2"/><path d="M11.2 15 H18.6" stroke="#fff" stroke-width="2"/></svg>
<div class="abs" style="left:1063px;top:1072px;width:16px;height:3px;background:#dd9be6;border-radius:2px"></div>
<!-- tray -->
<svg class="abs" style="left:1720px;top:1051px" width="14" height="9" viewBox="0 0 14 9"><path d="M1 7.8 L7 1.6 L13 7.8" stroke="#fff" stroke-width="1.2" fill="none"/></svg>
<div class="abs tray" style="left:1749px;top:1050px;letter-spacing:-.45px">ENG</div>
<svg class="abs" style="left:1790px;top:1047px" width="18" height="18" viewBox="0 0 18 18"><path d="M11 2.6 H1.6 V12 H11.6" fill="none" stroke="#fff" stroke-width="1.2"/><path d="M4 16 H11 M7.4 12 V16" stroke="#fff" stroke-width="1.2"/><rect x="12.6" y=".8" width="3.4" height="5" rx=".6" fill="none" stroke="#fff" stroke-width="1.1"/><path d="M14.3 5.8 V16.4" stroke="#fff" stroke-width="1.2"/></svg>
<svg class="abs" style="left:1814px;top:1048px" width="18" height="16" viewBox="0 0 18 16"><path d="M1.2 5.4 H4 L7.4 2.2 V13.8 L4 10.6 H1.2Z" fill="none" stroke="#fff" stroke-width="1.1" stroke-linejoin="round"/><path d="M9.6 5.6 Q11 8 9.6 10.4 M11.6 4 Q14 8 11.6 12" stroke="#fff" stroke-width="1.1" fill="none"/><path d="M13.8 2.6 Q16.8 8 13.8 13.4" stroke="rgba(255,255,255,.45)" stroke-width="1" fill="none"/></svg>
<div class="abs tray" style="left:1830px;top:1041px;width:70px;text-align:right;line-height:16px;letter-spacing:-.7px">2:39<br>07.12.2021</div>
</div>
<!-- top-level watermark -->
<div class="abs wm" style="left:1352px;top:922.8px;font-size:101px;line-height:116px;padding-bottom:30px;letter-spacing:-3.7px;opacity:.3">ragemp.pro</div>


</div>
</body>
</html>
